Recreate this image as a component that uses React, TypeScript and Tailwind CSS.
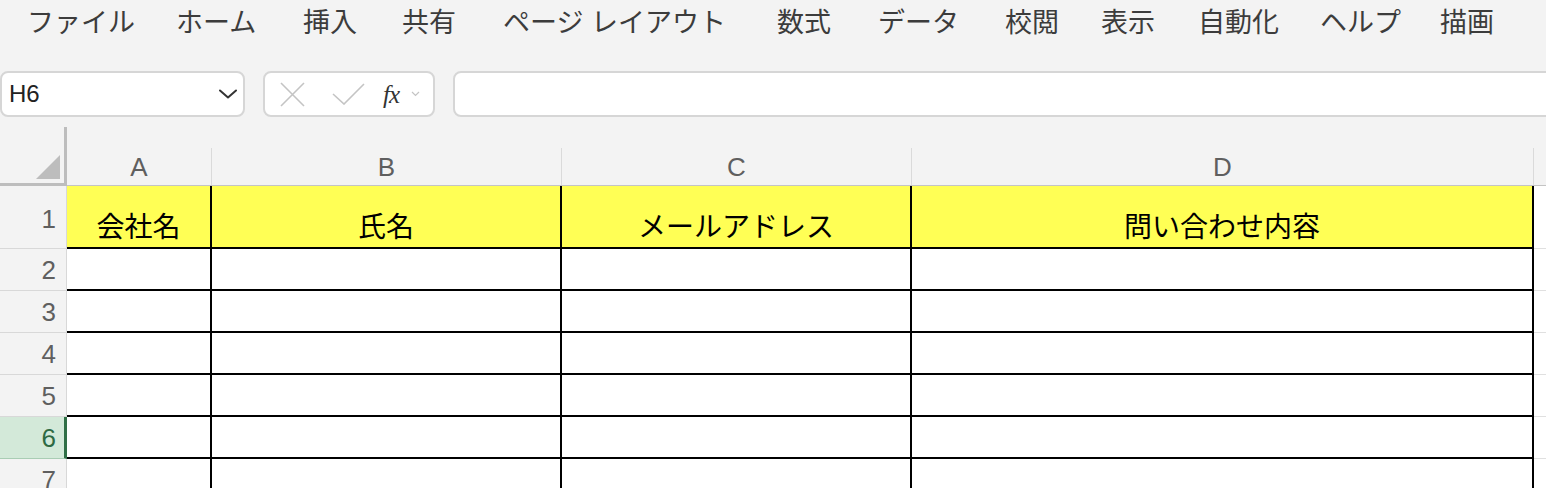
import React from 'react';

const FONT = '"Liberation Sans", "Noto Sans CJK JP", sans-serif';

// tab labels with the width each one takes in the ribbon strip
const MENU = [
  { label: 'ファイル', w: 'w-[149px]' },
  { label: 'ホーム', w: 'w-[127px]' },
  { label: '挿入', w: 'w-[99px]' },
  { label: '共有', w: 'w-[101px]' },
  { label: 'ページ レイアウト', w: 'w-[274px]' },
  { label: '数式', w: 'w-[101px]' },
  { label: 'データ', w: 'w-[127px]' },
  { label: '校閲', w: 'w-[96px]' },
  { label: '表示', w: 'w-[97px]' },
  { label: '自動化', w: 'w-[122px]' },
  { label: 'ヘルプ', w: 'w-[120px]' },
  { label: '描画', w: 'w-[100px]' },
];

const COLS = [
  { key: 'A', w: 'w-[145px]', title: '会社名' },
  { key: 'B', w: 'w-[350px]', title: '氏名' },
  { key: 'C', w: 'w-[350px]', title: 'メールアドレス' },
  { key: 'D', w: 'w-[622px]', title: '問い合わせ内容' },
];

const ROWS = [2, 3, 4, 5, 6, 7];
const SELECTED_ROW = 6;

const App: React.FC = () => {
  return (
    <div
      className="w-[1546px] h-[488px] overflow-hidden bg-[#f3f3f3] text-[#333]"
      style={{ fontFamily: FONT }}
    >
      {/* Ribbon tabs */}
      <div className="h-[46px] flex items-center pl-[27px] whitespace-nowrap">
        {MENU.map((m) => (
          <div key={m.label} className={`${m.w} shrink-0 text-[27px] leading-none text-[#3c3c3c]`}>
            {m.label}
          </div>
        ))}
      </div>

      {/* Formula bar */}
      <div className="mt-[25px] h-[46px] flex items-stretch">
        <div className="w-[245px] shrink-0 bg-white border-2 border-[#d6d6d6] rounded-[8px] flex items-center pl-[7px] pr-[6px]">
          <span className="flex-1 text-[24px] leading-none text-[#222]">H6</span>
          <svg width="18" height="10" viewBox="0 0 18 10" fill="none">
            <path d="M1 1.5 L9 8.5 L17 1.5" stroke="#333" strokeWidth="2" strokeLinecap="round" strokeLinejoin="round" />
          </svg>
        </div>

        <div className="ml-[18px] w-[172px] shrink-0 bg-white border-2 border-[#d6d6d6] rounded-[8px] flex items-center pl-[15px]">
          <svg width="25" height="25" viewBox="0 0 25 25" fill="none">
            <path d="M1 1 L24 24 M24 1 L1 24" stroke="#c4c4c4" strokeWidth="1.6" />
          </svg>
          <svg className="ml-[27px]" width="33" height="22" viewBox="0 0 33 22" fill="none">
            <path d="M1 11 L12 21 L32 1" stroke="#c4c4c4" strokeWidth="1.6" />
          </svg>
          <span
            className="ml-[18px] text-[25px] leading-none italic text-[#333] tracking-[-1px]"
            style={{ fontFamily: '"Liberation Serif", serif' }}
          >
            fx
          </span>
          <svg className="ml-[12px]" width="9" height="6" viewBox="0 0 9 6" fill="none">
            <path d="M1 1 L4.5 4.5 L8 1" stroke="#c4c4c4" strokeWidth="1.2" />
          </svg>
        </div>

        <div className="ml-[18px] w-[1110px] shrink-0 bg-white border-2 border-[#d6d6d6] rounded-[8px]" />
      </div>

      {/* Sheet */}
      <div className="mt-[10px]">
        {/* Column header */}
        <div className="flex h-[59px]">
          <div className="w-[67px] shrink-0 border-r-[3px] border-b-[3px] border-[#bdbdbd] flex items-end justify-end pr-[4px] pb-[4px]">
            <svg width="24" height="24" viewBox="0 0 24 24">
              <polygon points="24,0 24,24 0,24" fill="#bdbdbd" />
            </svg>
          </div>
          <div className="flex-1 flex border-b border-[#c4c4c4]">
            {COLS.map((c) => (
              <div key={c.key} className={`${c.w} shrink-0 flex flex-col justify-end`}>
                <div className="h-[37px] border-r border-[#dadada] flex items-center justify-center text-[26px] leading-none text-[#5f5f5f]">
                  {c.key}
                </div>
              </div>
            ))}
            <div className="flex-1" />
          </div>
        </div>

        {/* Row 1: titles */}
        <div className="flex h-[63px]">
          <div className="w-[67px] shrink-0 border-r border-b border-[#d8d8d8] flex items-center justify-end pr-[10px] pt-[4px] text-[26px] leading-none text-[#5f5f5f]">
            1
          </div>
          {COLS.map((c) => (
            <div
              key={c.key}
              className={`${c.w} shrink-0 bg-[#ffff55] border-r-2 border-b-2 border-black flex items-end justify-center pb-[5px] text-[28px] leading-none text-black`}
            >
              {c.title}
            </div>
          ))}
          <div className="flex-1 bg-white border-b border-[#e0e0e0]" />
        </div>

        {/* Empty rows */}
        {ROWS.map((r) => {
          const sel = r === SELECTED_ROW;
          return (
            <div key={r} className="flex h-[42px]">
              <div
                className={
                  sel
                    ? 'w-[67px] shrink-0 bg-[#d3e9d9] border-r-[3px] border-r-[#2f6f46] border-b border-b-[#a9cdb4] flex items-center justify-end pr-[8px] text-[26px] leading-none text-[#2d6a43]'
                    : 'w-[67px] shrink-0 border-r border-b border-[#d8d8d8] flex items-center justify-end pr-[10px] text-[26px] leading-none text-[#5f5f5f]'
                }
              >
                {r}
              </div>
              {COLS.map((c) => (
                <div key={c.key} className={`${c.w} shrink-0 bg-white border-r-2 border-b-2 border-black`} />
              ))}
              <div className="flex-1 bg-white border-b border-[#e0e0e0]" />
            </div>
          );
        })}
      </div>
    </div>
  );
};

export default App;
